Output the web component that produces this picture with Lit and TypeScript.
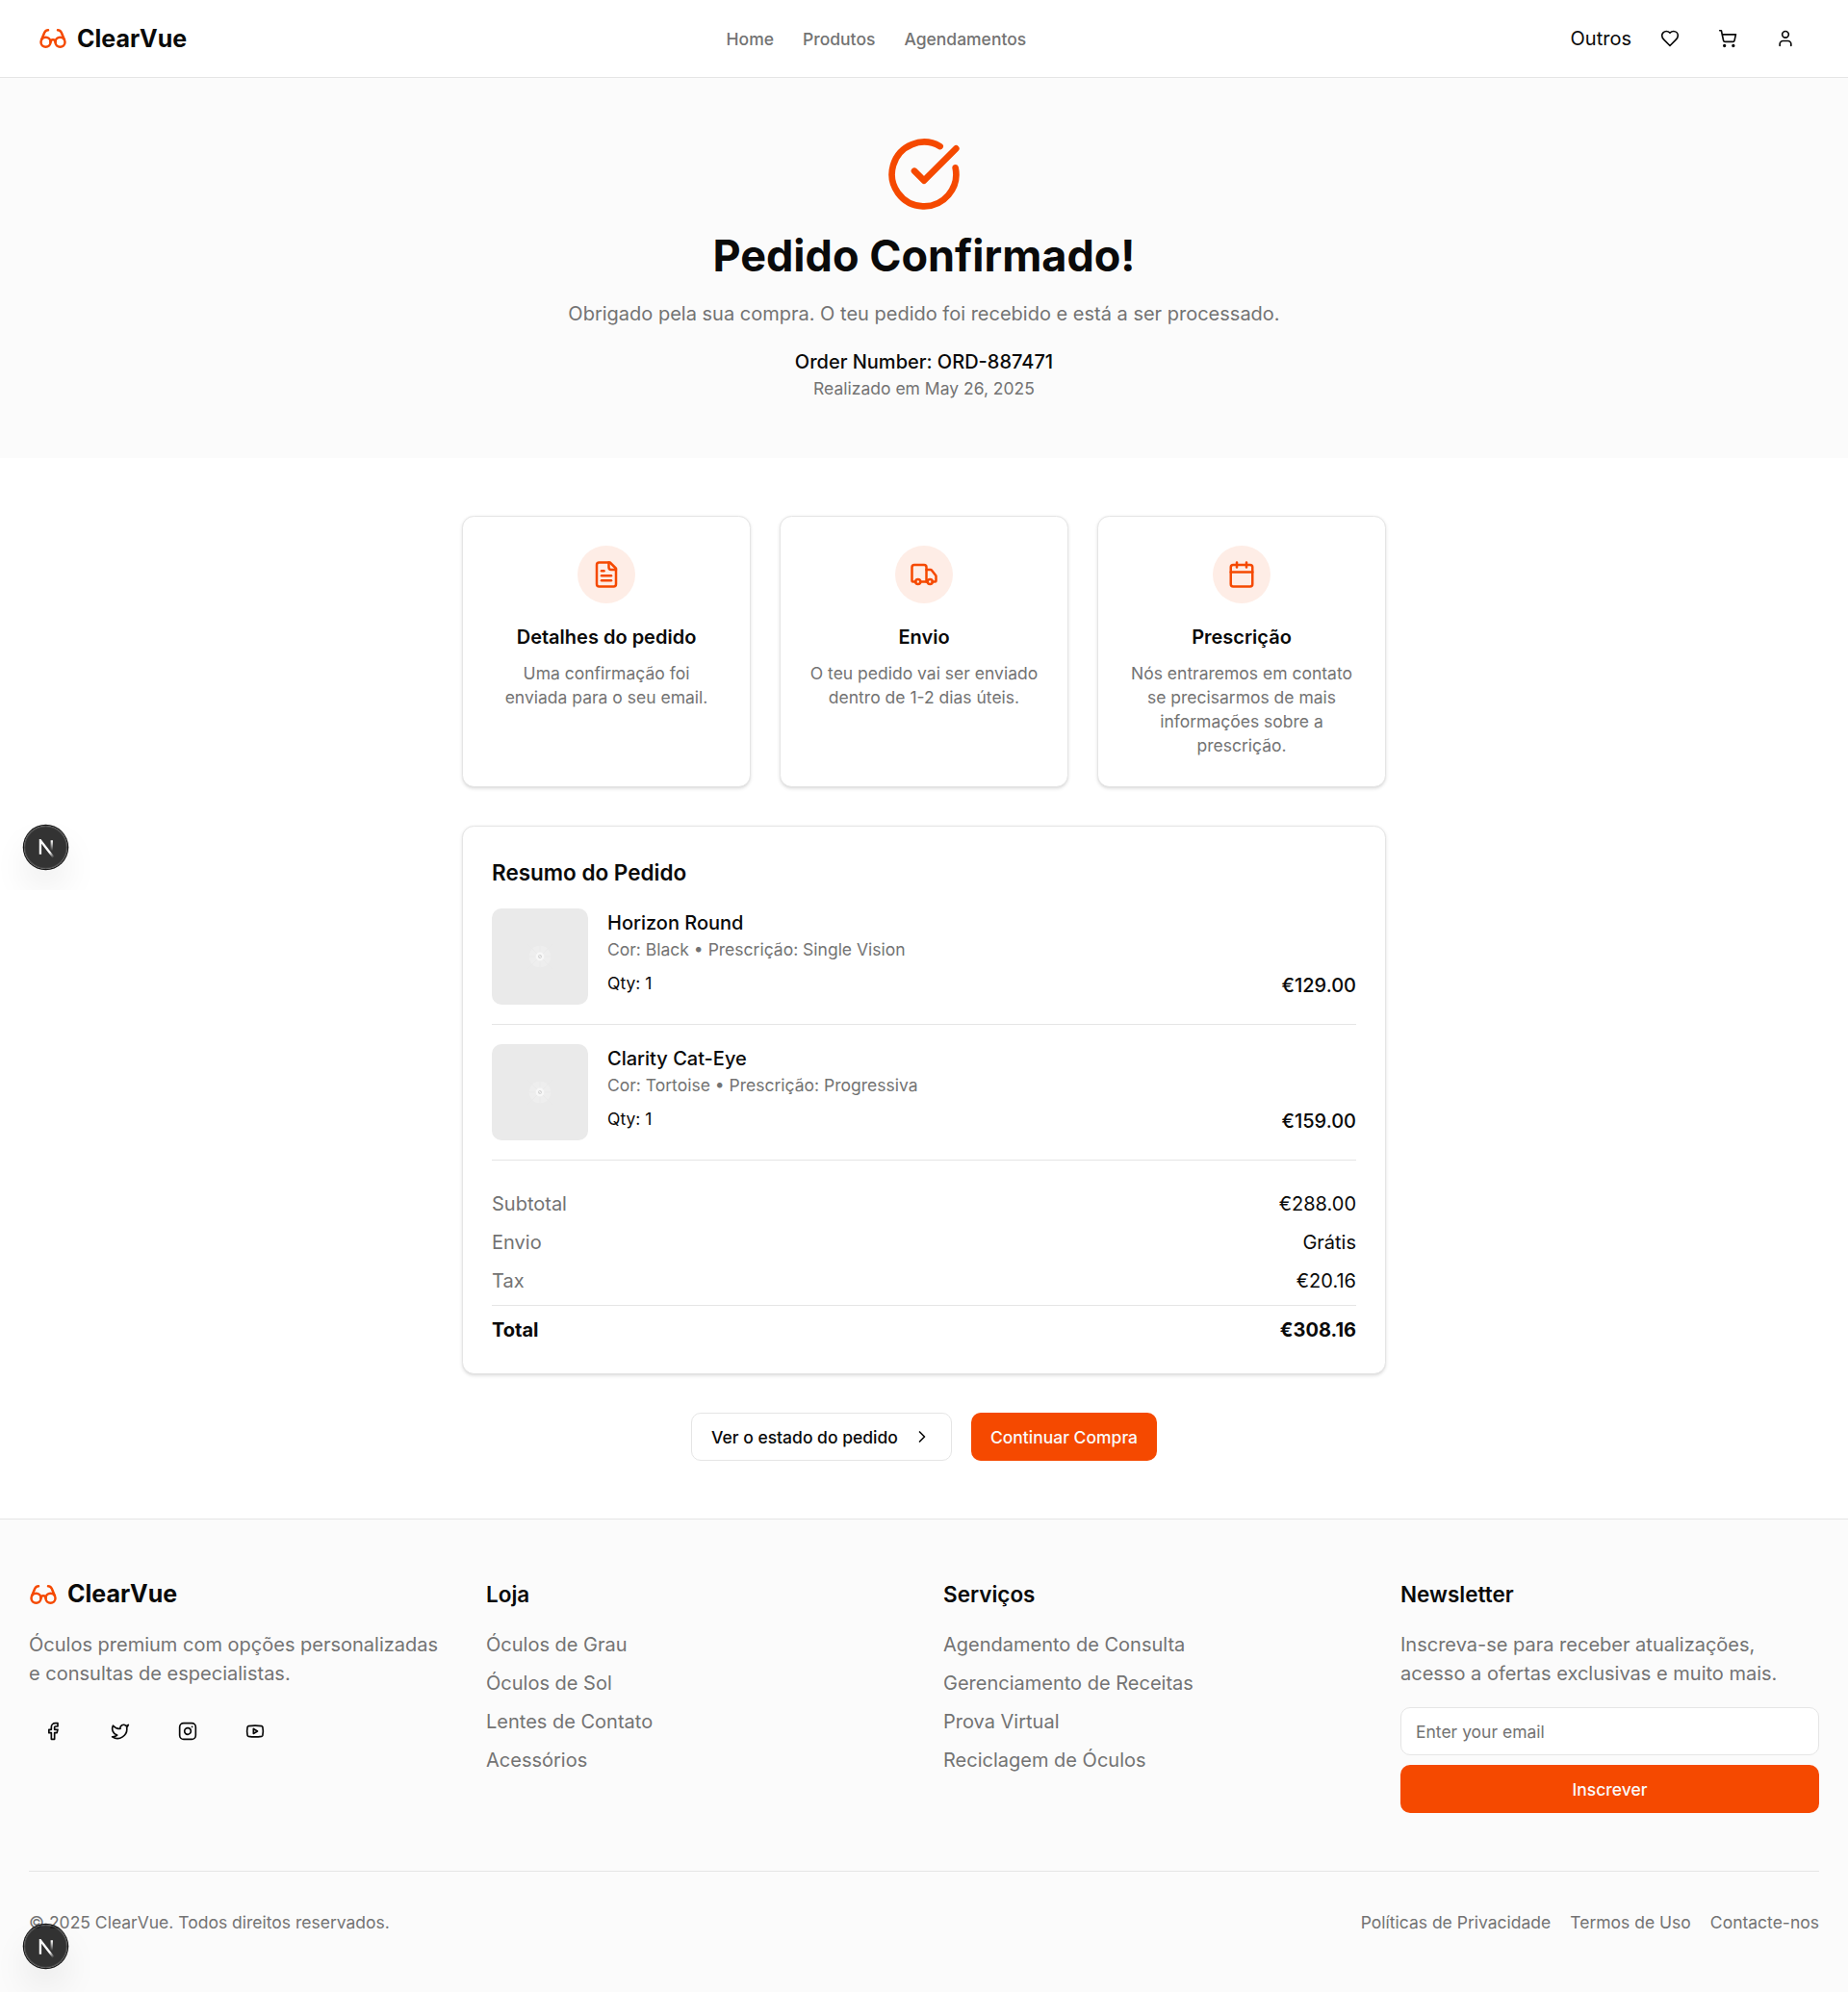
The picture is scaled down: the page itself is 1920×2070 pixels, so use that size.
import { LitElement, html, svg, css, type SVGTemplateResult } from "lit";
import { customElement, property } from "lit/decorators.js";

const ICONS: Record<string, SVGTemplateResult> = {
  glasses: svg`<circle cx="6" cy="15" r="4"/><circle cx="18" cy="15" r="4"/><path d="M14 15a2 2 0 0 0-2-2 2 2 0 0 0-2 2"/><path d="M2.5 13 5 7c.7-1.3 1.4-2 3-2"/><path d="M21.5 13 19 7c-.7-1.3-1.5-2-3-2"/>`,
  heart: svg`<path d="M19 14c1.49-1.46 3-3.21 3-5.5A5.5 5.5 0 0 0 16.5 3c-1.76 0-3 .5-4.5 2-1.5-1.5-2.74-2-4.5-2A5.5 5.5 0 0 0 2 8.5c0 2.3 1.5 4.05 3 5.5l7 7Z"/>`,
  cart: svg`<circle cx="8" cy="21" r="1"/><circle cx="19" cy="21" r="1"/><path d="M2.05 2.05h2l2.66 12.42a2 2 0 0 0 2 1.58h9.78a2 2 0 0 0 1.95-1.57l1.65-7.43H5.12"/>`,
  user: svg`<path d="M19 21v-2a4 4 0 0 0-4-4H9a4 4 0 0 0-4 4v2"/><circle cx="12" cy="7" r="4"/>`,
  check: svg`<path d="M21.801 10A10 10 0 1 1 17 3.335"/><path d="m9 11 3 3L22 4"/>`,
  file: svg`<path d="M15 2H6a2 2 0 0 0-2 2v16a2 2 0 0 0 2 2h12a2 2 0 0 0 2-2V7Z"/><path d="M14 2v4a2 2 0 0 0 2 2h4"/><path d="M10 9H8"/><path d="M16 13H8"/><path d="M16 17H8"/>`,
  truck: svg`<path d="M14 18V6a2 2 0 0 0-2-2H4a2 2 0 0 0-2 2v11a1 1 0 0 0 1 1h2"/><path d="M15 18H9"/><path d="M19 18h2a1 1 0 0 0 1-1v-3.65a1 1 0 0 0-.22-.624l-3.48-4.35A1 1 0 0 0 17.52 8H14"/><circle cx="17" cy="18" r="2"/><circle cx="7" cy="18" r="2"/>`,
  calendar: svg`<path d="M8 2v4"/><path d="M16 2v4"/><rect width="18" height="18" x="3" y="4" rx="2"/><path d="M3 10h18"/>`,
  chevron: svg`<path d="m9 18 6-6-6-6"/>`,
  facebook: svg`<path d="M18 2h-3a5 5 0 0 0-5 5v3H7v4h3v8h4v-8h3l1-4h-4V7a1 1 0 0 1 1-1h3z"/>`,
  twitter: svg`<path d="M22 4s-.7 2.1-2 3.4c1.6 10-9.4 17.3-18 11.6 2.2.1 4.4-.6 6-2C3 15.5.5 9.6 3 5c2.2 2.6 5.6 4.1 9 4-.9-4.2 4-6.6 7-3.8 1.1 0 3-1.2 3-1.2z"/>`,
  instagram: svg`<rect width="20" height="20" x="2" y="2" rx="5"/><path d="M16 11.37A4 4 0 1 1 12.63 8 4 4 0 0 1 16 11.37z"/><path d="M17.5 6.5h.01"/>`,
  youtube: svg`<path d="M2.5 17a24.12 24.12 0 0 1 0-10 2 2 0 0 1 1.4-1.4 49.56 49.56 0 0 1 16.2 0A2 2 0 0 1 21.5 7a24.12 24.12 0 0 1 0 10 2 2 0 0 1-1.4 1.4 49.55 49.55 0 0 1-16.2 0A2 2 0 0 1 2.5 17"/><path d="m10 15 5-3-5-3z"/>`,
};

@customElement("ui-icon")
class UiIcon extends LitElement {
  @property() name = "";

  static styles = css`
    :host { display: block; width: 20px; height: 20px; flex: none; }
    .icon { display: block; width: 100%; height: 100%; fill: none; stroke: currentColor; stroke-width: 2; stroke-linecap: round; stroke-linejoin: round; }
  `;

  render() {
    return html`<svg class="icon" viewBox="0 0 24 24" aria-hidden="true">${ICONS[this.name]}</svg>`;
  }
}

@customElement("brand-mark")
class BrandMark extends LitElement {
  static styles = css`
    :host { display: flex; align-items: center; gap: 10px; font-size: 25px; line-height: 35px; font-weight: 700; }
    .glyph { width: 30px; height: 30px; color: #f54900; }
  `;

  render() {
    return html`<ui-icon class="glyph" name="glasses"></ui-icon><span>ClearVue</span>`;
  }
}

@customElement("dev-badge")
class DevBadge extends LitElement {
  static styles = css`
    :host { display: block; }
    .badge { box-sizing: border-box; width: 45px; height: 45px; padding: 14.5px 0 0 13.75px; border-radius: 50%; background: rgba(0, 0, 0, 0.8); backdrop-filter: blur(48px); box-shadow: 0 0 0 1.25px #171717, inset 0 0 0 1.25px hsla(0, 0%, 100%, 0.14), 0 20px 40px -10px rgba(0, 0, 0, 0.24); }
    .mark { display: block; width: 20px; height: 20px; fill: none; stroke-width: 1.86; }
  `;

  render() {
    return html`<div class="badge">
      <svg class="mark" viewBox="0 0 16 16" aria-hidden="true">
        <defs>
          <linearGradient id="diagonal" gradientUnits="userSpaceOnUse" x1="9.95" y1="11.12" x2="15.48" y2="17.97"><stop stop-color="#fff"/><stop offset="0.604" stop-color="#fff" stop-opacity="0"/></linearGradient>
          <linearGradient id="stem" gradientUnits="userSpaceOnUse" x1="11.82" y1="1.4" x2="11.79" y2="9.62"><stop stop-color="#fff"/><stop offset="1" stop-color="#fff" stop-opacity="0"/></linearGradient>
        </defs>
        <path d="M13.3 15.2 2.34 1V12.6" stroke="url(#diagonal)"/>
        <path d="M11.825 1V12.6" stroke="url(#stem)"/>
      </svg>
    </div>`;
  }
}

@customElement("product-thumb")
class ProductThumb extends LitElement {
  static styles = css`
    :host { display: block; flex: none; width: 100px; height: 100px; border-radius: 10px; overflow: hidden; }
    .art { display: block; width: 100px; height: 100px; background: #eaeaea; }
  `;

  render() {
    return html`<svg class="art" viewBox="0 0 100 100" fill="none" aria-hidden="true">
      <circle cx="50" cy="50" r="11.3" fill="#eeeeee"/>
      <path d="M50 38.5v23M38.5 50h23M37 37l26 26M63 37 37 63" stroke="#e7e7e7" stroke-width=".6"/>
      <circle cx="50" cy="50" r="4.4" fill="#f7f7f7"/>
      <circle cx="50" cy="50" r="1.6" stroke="#cfcfcf" stroke-width=".8"/>
      <path d="m49 51 2-2" stroke="#cfcfcf" stroke-width=".6"/>
    </svg>`;
  }
}

const STEPS = [
  { icon: "file", title: "Detalhes do pedido", text: "Uma confirmação foi enviada para o seu email." },
  { icon: "truck", title: "Envio", text: "O teu pedido vai ser enviado dentro de 1-2 dias úteis." },
  { icon: "calendar", title: "Prescrição", text: "Nós entraremos em contato se precisarmos de mais informações sobre a prescrição." },
];

const ITEMS = [
  { name: "Horizon Round", detail: "Cor: Black • Prescrição: Single Vision", qty: 1, price: "€129.00" },
  { name: "Clarity Cat-Eye", detail: "Cor: Tortoise • Prescrição: Progressiva", qty: 1, price: "€159.00" },
];

const TOTALS = [
  ["Subtotal", "€288.00"],
  ["Envio", "Grátis"],
  ["Tax", "€20.16"],
];

const LINK_COLUMNS = [
  { title: "Loja", links: ["Óculos de Grau", "Óculos de Sol", "Lentes de Contato", "Acessórios"] },
  { title: "Serviços", links: ["Agendamento de Consulta", "Gerenciamento de Receitas", "Prova Virtual", "Reciclagem de Óculos"] },
];

@customElement("app-root")
class AppRoot extends LitElement {
  static styles = css`
    :host { display: block; position: relative; background: #fff; color: #0a0a0a; font-family: Inter, "Liberation Sans", sans-serif; font-size: 20px; line-height: 30px; }
    * { box-sizing: border-box; }
    h1, h2, h3, p, ul { margin: 0; padding: 0; }
    ul { list-style: none; }
    a { color: inherit; text-decoration: none; }
    button, input { font: inherit; }

    .header { display: flex; align-items: center; justify-content: space-between; height: 81px; padding: 0 40px; border-bottom: 1px solid #e5e5e5; }
    .nav { display: flex; gap: 30px; font-size: 17.5px; line-height: 25px; font-weight: 500; color: #737373; }
    .actions { display: flex; align-items: center; gap: 10px; }
    .others { padding: 0 5px; }
    .icon-button { display: flex; align-items: center; justify-content: center; width: 50px; height: 50px; padding: 0; border: 0; background: none; color: inherit; }

    .hero { display: flex; flex-direction: column; align-items: center; padding: 60px 0; background: #fbfbfb; text-align: center; }
    .hero-icon { width: 80px; height: 80px; color: #f54900; }
    .hero-title { margin: 20px 0; font-size: 45px; line-height: 50px; font-weight: 700; }
    .hero-text { margin-bottom: 20px; color: #737373; }
    .order-number { font-weight: 500; }
    .small { font-size: 17.5px; line-height: 25px; }
    .muted { color: #737373; }

    .main { display: flex; flex-direction: column; gap: 40px; width: 960px; margin: 0 auto; padding: 60px 0; }
    .steps { display: grid; grid-template-columns: repeat(3, 1fr); gap: 30px; }
    .card { padding: 30px; background: #fff; border: 1px solid #e5e5e5; border-radius: 12.5px; box-shadow: 0 1.25px 3.75px rgba(0, 0, 0, 0.1), 0 1.25px 2.5px -1.25px rgba(0, 0, 0, 0.1); }
    .step { display: flex; flex-direction: column; align-items: center; text-align: center; }
    .step-icon { display: flex; align-items: center; justify-content: center; width: 60px; height: 60px; margin-bottom: 20px; border-radius: 50%; background: #feede6; color: #f54900; }
    .step-glyph { width: 30px; height: 30px; }
    .step-title { margin-bottom: 10px; font-size: 20px; line-height: 30px; font-weight: 600; }

    .section-title { font-size: 22.5px; line-height: 35px; font-weight: 600; margin-bottom: 20px; }
    .item { display: flex; gap: 20px; padding-bottom: 20px; border-bottom: 1px solid #e5e5e5; }
    .item + .item { padding-top: 20px; }
    .item-body { flex: 1; }
    .item-name { font-size: 20px; line-height: 30px; font-weight: 500; }
    .item-foot { display: flex; align-items: flex-start; justify-content: space-between; margin-top: 10px; }
    .price { font-weight: 500; }
    .totals { display: flex; flex-direction: column; gap: 10px; margin-top: 30px; }
    .row { display: flex; justify-content: space-between; }
    .grand { padding-top: 10px; border-top: 1px solid #e5e5e5; font-weight: 700; }

    .buttons { display: flex; justify-content: center; gap: 20px; }
    .button { display: flex; align-items: center; justify-content: center; gap: 10px; height: 50px; padding: 0 20px; border: 0; border-radius: 10px; font-size: 17.5px; line-height: 25px; font-weight: 500; white-space: nowrap; }
    .outline { border: 1px solid #e5e5e5; background: #fff; color: #0a0a0a; }
    .chevron { margin-left: 5px; }
    .solid { background: #f54900; color: #fafafa; }

    .footer { padding: 60px 30px; background: #fbfbfb; border-top: 1px solid #e5e5e5; }
    .columns { display: grid; grid-template-columns: repeat(4, 1fr); gap: 40px; }
    .social { display: flex; gap: 20px; margin-top: 20px; }
    .blurb { margin-top: 20px; color: #737373; }
    .links { display: flex; flex-direction: column; gap: 10px; color: #737373; }
    .form { display: flex; flex-direction: column; gap: 10px; margin-top: 20px; }
    .input { width: 100%; height: 50px; padding: 0 15px; border: 1px solid #e5e5e5; border-radius: 10px; background: #fff; color: #0a0a0a; font-size: 17.5px; }
    .input::placeholder { color: #737373; opacity: 1; }
    .legal { display: flex; justify-content: space-between; margin-top: 60px; padding-top: 40px; border-top: 1px solid #e5e5e5; color: #737373; }
    .legal-links { display: flex; gap: 20px; }

    .overlay { position: absolute; left: 0; width: 160px; height: 125px; overflow: hidden; padding: 57.5px 0 0 25px; pointer-events: none; }
    .overlay-fold { top: 800px; }
    .overlay-end { bottom: 0; height: 127.5px; }
  `;

  render() {
    return html`
      <header class="header">
        <brand-mark></brand-mark>
        <nav class="nav"><a>Home</a><a>Produtos</a><a>Agendamentos</a></nav>
        <div class="actions">
          <a class="others">Outros</a>
          ${["heart", "cart", "user"].map((n) => html`<button class="icon-button"><ui-icon name=${n}></ui-icon></button>`)}
        </div>
      </header>

      <section class="hero">
        <ui-icon class="hero-icon" name="check"></ui-icon>
        <h1 class="hero-title">Pedido Confirmado!</h1>
        <p class="hero-text">Obrigado pela sua compra. O teu pedido foi recebido e está a ser processado.</p>
        <p class="order-number">Order Number: ORD-887471</p>
        <p class="small muted">Realizado em May 26, 2025</p>
      </section>

      <main class="main">
        <div class="steps">
          ${STEPS.map((s) => html`<article class="card step">
            <div class="step-icon"><ui-icon class="step-glyph" name=${s.icon}></ui-icon></div>
            <h3 class="step-title">${s.title}</h3>
            <p class="small muted">${s.text}</p>
          </article>`)}
        </div>

        <section class="card">
          <h2 class="section-title">Resumo do Pedido</h2>
          ${ITEMS.map((i) => html`<div class="item">
            <product-thumb></product-thumb>
            <div class="item-body">
              <h3 class="item-name">${i.name}</h3>
              <p class="small muted">${i.detail}</p>
              <div class="item-foot"><span class="small">Qty: ${i.qty}</span><span class="price">${i.price}</span></div>
            </div>
          </div>`)}
          <div class="totals">
            ${TOTALS.map(([label, value]) => html`<div class="row"><span class="muted">${label}</span><span>${value}</span></div>`)}
            <div class="row grand"><span>Total</span><span>€308.16</span></div>
          </div>
        </section>

        <div class="buttons">
          <button class="button outline">Ver o estado do pedido<ui-icon class="chevron" name="chevron"></ui-icon></button>
          <button class="button solid">Continuar Compra</button>
        </div>
      </main>

      <footer class="footer">
        <div class="columns">
          <div>
            <brand-mark></brand-mark>
            <p class="blurb">Óculos premium com opções personalizadas e consultas de especialistas.</p>
            <div class="social">
              ${["facebook", "twitter", "instagram", "youtube"].map((n) => html`<button class="icon-button"><ui-icon name=${n}></ui-icon></button>`)}
            </div>
          </div>
          ${LINK_COLUMNS.map((c) => html`<div>
            <h3 class="section-title">${c.title}</h3>
            <ul class="links">${c.links.map((l) => html`<li><a>${l}</a></li>`)}</ul>
          </div>`)}
          <div>
            <h3 class="section-title">Newsletter</h3>
            <p class="muted">Inscreva-se para receber atualizações, acesso a ofertas exclusivas e muito mais.</p>
            <div class="form">
              <input class="input" type="email" placeholder="Enter your email" />
              <button class="button solid">Inscrever</button>
            </div>
          </div>
        </div>
        <div class="legal small">
          <p>© 2025 ClearVue. Todos direitos reservados.</p>
          <div class="legal-links"><a>Políticas de Privacidade</a><a>Termos de Uso</a><a>Contacte-nos</a></div>
        </div>
      </footer>

      <div class="overlay overlay-fold"><dev-badge></dev-badge></div>
      <div class="overlay overlay-end"><dev-badge></dev-badge></div>
    `;
  }
}
